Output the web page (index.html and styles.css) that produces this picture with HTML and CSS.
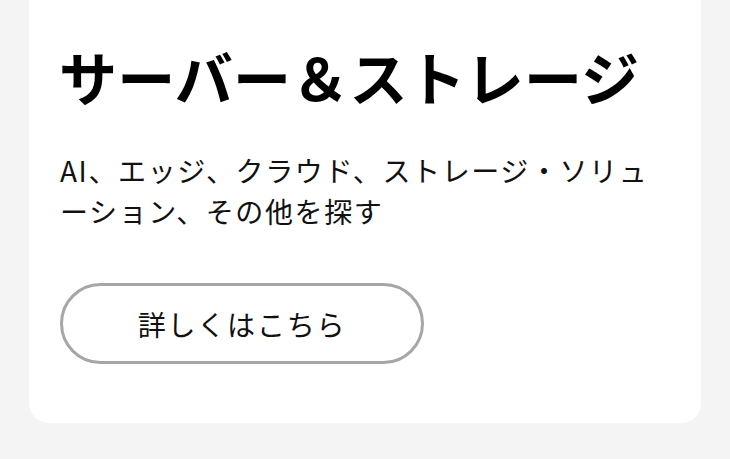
FILE: index.html
```html
<!DOCTYPE html>
<html lang="ja">
<head>
<meta charset="utf-8">
<link rel="stylesheet" href="styles.css">
</head>
<body>
<div class="page">
  <section class="card">
    <h2 class="card-title">サーバー＆ストレージ</h2>
    <p class="card-text">AI、エッジ、クラウド、ストレージ・ソリューション、その他を探す</p>
    <a class="card-button" href="#">詳しくはこちら</a>
  </section>
</div>
</body>
</html>
```

FILE: styles.css
```css
html, body {
  margin: 0;
  padding: 0;
  background: #f4f4f4;
}
body {
  font-family: "Noto Sans CJK JP", "Noto Sans", sans-serif;
  color: #000;
}
.page {
  width: 730px;
  height: 459px;
  box-sizing: border-box;
  padding: 0 29px 36px 29px;
}
.card {
  background: #fff;
  border-radius: 0 0 20px 20px;
  padding: 36px 31px 59px 31px;
  display: flex;
  flex-direction: column;
  align-items: flex-start;
}
.card-title {
  margin: 0 0 0 -1px;
  font-size: 58px;
  line-height: 80px;
  font-weight: 700;
  letter-spacing: 0.2px;
  color: #000;
}
.card-text {
  margin: 34px 0 0 0;
  font-size: 28px;
  line-height: 41px;
  letter-spacing: 1.6px;
  color: #111;
  font-weight: 400;
}
.card-button {
  margin-top: 51px;
  box-sizing: border-box;
  width: 364px;
  height: 81px;
  border: 3px solid #a6a6a6;
  border-radius: 41px;
  display: flex;
  align-items: center;
  justify-content: center;
  font-size: 28px;
  letter-spacing: 1.8px;
  color: #111;
  text-decoration: none;
}
```
